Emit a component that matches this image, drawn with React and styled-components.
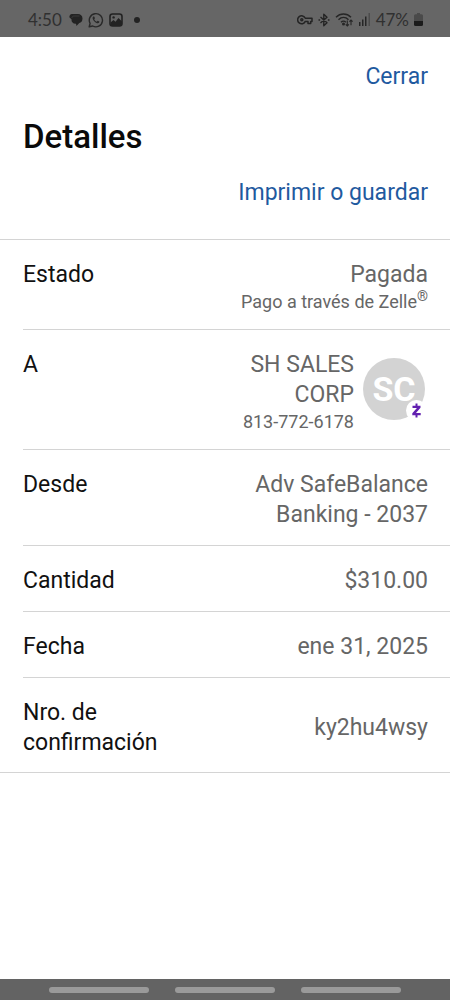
import React from 'react'
import styled, { createGlobalStyle } from 'styled-components'

const GlobalStyle = createGlobalStyle`
  * {
    box-sizing: border-box;
  }
  body {
    margin: 0;
    background-color: #fff;
    font-family: Roboto, 'Liberation Sans', sans-serif;
    color: #111;
  }
`

const Root = styled.div`
  display: flex;
  flex-direction: column;
  min-height: 100vh;
`

const StatusBar = styled.div`
  display: flex;
  justify-content: space-between;
  align-items: center;
  height: 37px;
  padding: 2px 27px 0 28px;
  background-color: #666;
  color: #303030;
  font-family: Lato, Roboto, sans-serif;
  font-size: 17px;
  line-height: 20px;
`

const StatusGroup = styled.div`
  display: flex;
  align-items: center;
  gap: 5px;
`

const Time = styled.span`
  margin-right: 2px;
`

const Dot = styled.span`
  width: 6px;
  height: 6px;
  margin-left: 6px;
  border-radius: 50%;
  background-color: #222;
`

const Glyph = styled.svg`
  display: block;
  flex: none;
`

const Header = styled.header`
  display: flex;
  flex-direction: column;
  padding: 25px 22px 31px 23px;
  border-bottom: 1px solid #d4d4d4;
`

const Action = styled.button`
  align-self: flex-end;
  padding: 0;
  border: 0;
  background: none;
  color: #1f5a9f;
  font-family: inherit;
  font-size: 23px;
  line-height: 30px;
  cursor: pointer;
`

const Title = styled.h1`
  margin: 27px 0 23px;
  color: #0a0a0a;
  font-size: 33px;
  font-weight: 500;
  line-height: 36px;
`

const Main = styled.main`
  flex: 1;
`

const List = styled.dl`
  margin: 0;
  padding-left: 23px;
  border-bottom: 1px solid #d4d4d4;
`

const Row = styled.div`
  display: flex;
  justify-content: space-between;
  align-items: ${props => (props.$center ? 'center' : 'flex-start')};
  padding: 20px 22px 15px 0;
  border-bottom: 1px solid #d4d4d4;
  font-size: 23px;
  line-height: 30px;
  &:last-child {
    padding-bottom: 14px;
    border-bottom-width: 0;
  }
`

const Label = styled.dt`
  max-width: 160px;
`

const Value = styled.dd`
  display: flex;
  align-items: center;
  gap: 9px;
  max-width: 200px;
  margin: 0;
  color: #666;
  text-align: right;
`

const Note = styled.div`
  font-size: 18px;
  line-height: 24px;
  white-space: nowrap;
  sup {
    font-size: 14px;
    line-height: 0;
  }
`

const Avatar = styled.div`
  position: relative;
  display: flex;
  flex: none;
  justify-content: center;
  align-items: center;
  width: 62px;
  height: 62px;
  margin: 0 3px 6px 0;
  border-radius: 50%;
  background-color: #d3d3d3;
  color: #fff;
  font-size: 34px;
  font-weight: 700;
`

const Badge = styled.span`
  position: absolute;
  right: -2px;
  bottom: -1px;
  display: flex;
  justify-content: center;
  align-items: center;
  width: 21px;
  height: 21px;
  border-radius: 50%;
  background-color: #fff;
`

const NavBar = styled.nav`
  display: flex;
  gap: 26px;
  padding: 8px 49px 7px;
  background-color: #636363;
`

const NavPill = styled.button`
  flex: 1;
  height: 6px;
  padding: 0;
  border: 0;
  border-radius: 3px;
  background-color: #9a9a9a;
`

const ChatIcon = () => (
  <Glyph width="14" height="14" viewBox="0 0 14 14" fill="#222">
    <path d="M3 1h6c2.400 0 4.500 1.600 4.500 4.500S12 9.500 10.300 10L7.500 13 7 10.700H6.500C4 10.700 2.500 9 2.500 7V6.200L.5 4.600C0 3 1.200 1 3 1Z" />
    <path d="M2.800 4.800C3.300 3.300 4.300 3 5.500 3h5" fill="none" stroke="#4a4a4a" strokeWidth=".6" />
  </Glyph>
)

const WhatsAppIcon = () => (
  <Glyph width="16" height="16" viewBox="0 0 16 16" fill="none" stroke="#292929" strokeWidth="1.400">
    <path d="m1.200 14.800.9-3.400A6.600 6.600 0 1 1 4.700 14Z" strokeLinejoin="round" />
    <path d="M5.200 4.500c-1.500 1.600.2 4.100 1.700 5.400 1.700 1.500 3.500 2 4.300.7l.2-1-1.800-.9-.9 1C7.500 9.200 6.700 8.300 6.200 7.200l.8-.9-.8-1.800Z" fill="#292929" stroke="none" />
  </Glyph>
)

const PictureIcon = () => (
  <Glyph width="14" height="14" viewBox="0 0 14 14">
    <rect x="1" y="1" width="12" height="12" rx="2.500" fill="none" stroke="#222" strokeWidth="1.600" />
    <path d="m1.500 9.500 3-2.500 2 1.700 3-3.700 3.500 3.500V12l-1 1H2.500l-1-1Z" fill="#222" />
    <circle cx="4.600" cy="4.400" r="1.200" fill="#222" />
  </Glyph>
)

const KeyIcon = () => (
  <Glyph width="16" height="12" viewBox="0 0 16 12" fill="none" stroke="#242424" strokeWidth="1.500" strokeLinejoin="round">
    <path d="M8.300 4.200H15v3.200h-1.300v2H11v-2H8.300A4 4 0 1 1 8.300 4.200Z" />
    <circle cx="4.800" cy="5.800" r="1" />
  </Glyph>
)

const BluetoothIcon = () => (
  <Glyph width="12" height="14" viewBox="0 0 12 14" fill="none" stroke="#242424" strokeWidth="1.400" strokeLinejoin="round">
    <path d="m2.500 4 6.500 5.800-3.200 3V1.200l3.200 3L2.500 10" />
    <path d="M.5 7h1.600M9.900 7h1.600" />
  </Glyph>
)

const WifiIcon = () => (
  <Glyph width="19" height="15" viewBox="0 0 19 15" fill="none" stroke="#262626" strokeWidth="1.400">
    <path d="M1 5.200c4.300-4.300 10.700-4.300 15 0M3.500 7.800c3-3 7-3 10 0M6 10.200c1.500-1.500 3.500-1.500 4.800 0" />
    <circle cx="8.500" cy="12" r=".8" fill="#262626" />
    <path d="M12.300 8.500V14M10.700 12.300l1.600 1.700 1.600-1.700M16 13.200V8M14.400 9.700 16 8l1.600 1.700" strokeWidth="1.100" />
  </Glyph>
)

const SignalIcon = () => (
  <Glyph width="12" height="13" viewBox="0 0 12 13" fill="#262626">
    <rect x="0" y="9" width="1.500" height="4" />
    <rect x="3" y="6.500" width="1.500" height="6.500" />
    <rect x="6" y="3.500" width="1.500" height="9.500" />
    <rect x="9.500" y="0" width="1.500" height="13" opacity=".4" />
  </Glyph>
)

const BatteryIcon = () => (
  <Glyph width="9" height="13" viewBox="0 0 9 13">
    <path d="M3 0h3v1.200h1.500Q9 1.200 9 2.800V8H0V2.800Q0 1.200 1.500 1.200H3Z" fill="#4a4a4a" />
    <path d="M0 8h9v3.400Q9 13 7.500 13h-6Q0 13 0 11.400Z" fill="#1b1b1b" />
  </Glyph>
)

const ZelleIcon = () => (
  <Glyph width="13" height="15" viewBox="0 0 13 15" fill="#6220b0">
    <path d="M5.500.5h2v2.200h3v2.100L6 10h4.700v2.300H7.500v2.200h-2v-2.200H2.300v-2.100L6.900 5H2.500V2.700h3Z" />
  </Glyph>
)

export default function App() {
  return (
    <Root>
      <GlobalStyle />
      <StatusBar>
        <StatusGroup>
          <Time>4:50</Time>
          <ChatIcon />
          <WhatsAppIcon />
          <PictureIcon />
          <Dot />
        </StatusGroup>
        <StatusGroup>
          <KeyIcon />
          <BluetoothIcon />
          <WifiIcon />
          <SignalIcon />
          <span>47%</span>
          <BatteryIcon />
        </StatusGroup>
      </StatusBar>
      <Main>
        <Header>
          <Action type="button">Cerrar</Action>
          <Title>Detalles</Title>
          <Action type="button">Imprimir o guardar</Action>
        </Header>
        <List>
          <Row>
            <Label>Estado</Label>
            <Value>
              <div>
                Pagada
                <Note>
                  Pago a través de Zelle<sup>®</sup>
                </Note>
              </div>
            </Value>
          </Row>
          <Row>
            <Label>A</Label>
            <Value>
              <div>
                SH SALES CORP
                <Note>813-772-6178</Note>
              </div>
              <Avatar>
                SC
                <Badge>
                  <ZelleIcon />
                </Badge>
              </Avatar>
            </Value>
          </Row>
          <Row>
            <Label>Desde</Label>
            <Value>Adv SafeBalance Banking - 2037</Value>
          </Row>
          <Row>
            <Label>Cantidad</Label>
            <Value>$310.00</Value>
          </Row>
          <Row>
            <Label>Fecha</Label>
            <Value>ene 31, 2025</Value>
          </Row>
          <Row $center>
            <Label>Nro. de confirmación</Label>
            <Value>ky2hu4wsy</Value>
          </Row>
        </List>
      </Main>
      <NavBar>
        <NavPill type="button" aria-label="Recientes" />
        <NavPill type="button" aria-label="Inicio" />
        <NavPill type="button" aria-label="Atrás" />
      </NavBar>
    </Root>
  )
}
